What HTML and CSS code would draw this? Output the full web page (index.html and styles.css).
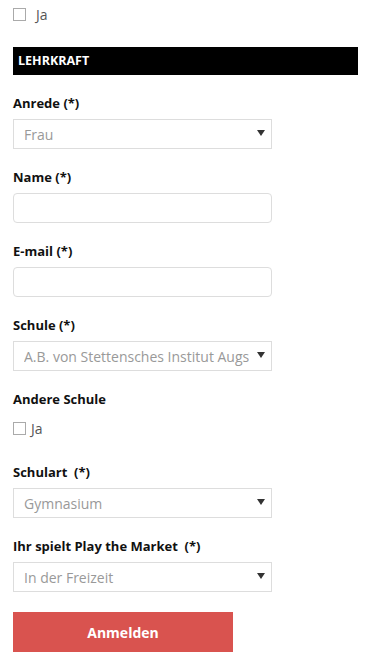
FILE: index.html
```html
<!DOCTYPE html>
<html lang="de">
<head>
    <meta charset="UTF-8">
    <meta name="viewport" content="width=device-width, initial-scale=1.0">
    <title>Anmeldung Lehrkraft</title>
    <link rel="stylesheet" href="styles.css">
</head>
<body>

    <form class="signup">
        <label class="check-row check-top">
            <input type="checkbox">
            <span>Ja</span>
        </label>

        <div class="section-bar">LEHRKRAFT</div>

        <div class="field">
            <label class="field-label">Anrede (*)</label>
            <div class="select-wrap">
                <select>
                    <option>Frau</option>
                    <option>Herr</option>
                </select>
            </div>
        </div>

        <div class="field">
            <label class="field-label">Name (*)</label>
            <input type="text" class="text-input">
        </div>

        <div class="field">
            <label class="field-label">E-mail (*)</label>
            <input type="email" class="text-input">
        </div>

        <div class="field">
            <label class="field-label">Schule (*)</label>
            <div class="select-wrap">
                <select>
                    <option>A.B. von Stettensches Institut Augsburg</option>
                </select>
            </div>
        </div>

        <div class="field field-check">
            <label class="field-label">Andere Schule</label>
            <label class="check-row check-small">
                <input type="checkbox">
                <span>Ja</span>
            </label>
        </div>

        <div class="field">
            <label class="field-label">Schulart&nbsp; (*)</label>
            <div class="select-wrap">
                <select>
                    <option>Gymnasium</option>
                    <option>Realschule</option>
                </select>
            </div>
        </div>

        <div class="field">
            <label class="field-label">Ihr spielt Play the Market&nbsp; (*)</label>
            <div class="select-wrap">
                <select>
                    <option>In der Freizeit</option>
                    <option>Im Unterricht</option>
                </select>
            </div>
        </div>

        <button type="button" class="submit-btn">Anmelden</button>
    </form>

</body>
</html>
```

FILE: styles.css
```css
/* General */
body {
    margin: 0;
    font-family: "Open Sans", Arial, sans-serif;
    background-color: #fff;
    color: #111;
}

.signup {
    width: 345px;
    padding: 4px 0 0 13px;
}

/* Checkbox rows */
.check-row {
    display: flex;
    align-items: center;
    height: 20px;
    font-size: 14px;
    color: #555;
}

.check-row input {
    appearance: none;
    -webkit-appearance: none;
    width: 13px;
    height: 13px;
    margin: 0;
    border: 1px solid #aaa;
    background: #fff;
    box-sizing: border-box;
}

.check-top span {
    margin-left: 10px;
}

.check-small span {
    margin-left: 5px;
}

/* Section heading */
.section-bar {
    margin-top: 23px;
    height: 28px;
    line-height: 28px;
    padding-left: 5px;
    background-color: #000;
    color: #fff;
    font-size: 12.5px;
    font-weight: 700;
}

/* Fields */
.field {
    margin-top: 18px;
}

.field-label {
    display: block;
    height: 20px;
    line-height: 20px;
    margin-bottom: 6px;
    font-size: 13px;
    font-weight: 700;
    color: #111;
}

.field-check .field-label {
    margin-bottom: 9px;
}

.field-check + .field {
    margin-top: 24px;
}

.text-input,
select {
    display: block;
    width: 259px;
    height: 30px;
    margin: 0;
    border: 1px solid #ddd;
    box-sizing: border-box;
    font-family: inherit;
    font-size: 14px;
    background-color: #fff;
}

.text-input {
    border-radius: 4px;
    padding: 0 10px;
}

select {
    appearance: none;
    -webkit-appearance: none;
    border-radius: 0;
    padding: 0 22px 0 10px;
    color: #999;
}

.select-wrap {
    position: relative;
    width: 259px;
}

.select-wrap::after {
    content: "";
    position: absolute;
    top: 11px;
    right: 7px;
    border-left: 4px solid transparent;
    border-right: 4px solid transparent;
    border-top: 6px solid #333;
    pointer-events: none;
}

/* Submit */
.submit-btn {
    display: block;
    margin-top: 20px;
    width: 220px;
    height: 40px;
    border: none;
    background-color: #d9534f;
    color: #fff;
    font-family: inherit;
    font-size: 14px;
    font-weight: 700;
    cursor: pointer;
}
```
